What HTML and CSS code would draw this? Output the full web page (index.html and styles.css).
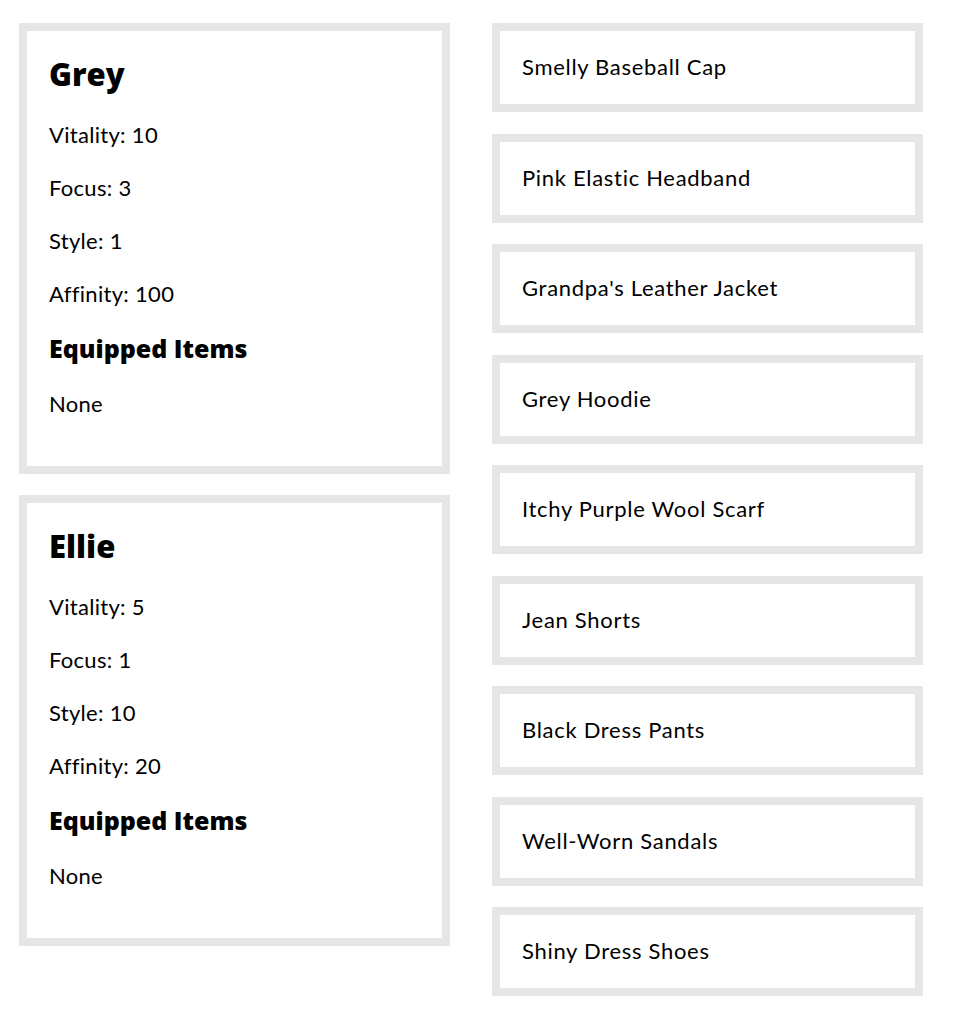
FILE: index.html
```html
<!DOCTYPE html>
<html lang="en">
<head>
<meta charset="utf-8">
<title>Characters</title>
<link rel="stylesheet" href="styles.css">
</head>
<body>
<div class="app">
  <div class="characters">
    <div class="card">
      <h2 class="name">Grey</h2>
      <p class="stat">Vitality: 10</p>
      <p class="stat">Focus: 3</p>
      <p class="stat">Style: 1</p>
      <p class="stat">Affinity: 100</p>
      <h3 class="subhead">Equipped Items</h3>
      <p class="stat">None</p>
    </div>
    <div class="card">
      <h2 class="name">Ellie</h2>
      <p class="stat">Vitality: 5</p>
      <p class="stat">Focus: 1</p>
      <p class="stat">Style: 10</p>
      <p class="stat">Affinity: 20</p>
      <h3 class="subhead">Equipped Items</h3>
      <p class="stat">None</p>
    </div>
  </div>
  <div class="items">
    <div class="item"><p class="item-name">Smelly Baseball Cap</p></div>
    <div class="item"><p class="item-name">Pink Elastic Headband</p></div>
    <div class="item"><p class="item-name">Grandpa's Leather Jacket</p></div>
    <div class="item"><p class="item-name">Grey Hoodie</p></div>
    <div class="item"><p class="item-name">Itchy Purple Wool Scarf</p></div>
    <div class="item"><p class="item-name">Jean Shorts</p></div>
    <div class="item"><p class="item-name">Black Dress Pants</p></div>
    <div class="item"><p class="item-name">Well-Worn Sandals</p></div>
    <div class="item"><p class="item-name">Shiny Dress Shoes</p></div>
  </div>
</div>
</body>
</html>
```
FILE: styles.css
```css
html, body {
  margin: 0;
  padding: 0;
  background: #ffffff;
}

body {
  font-family: Lato, "Noto Sans", "Liberation Sans", sans-serif;
  color: #000000;
}

.app {
  display: grid;
  grid-template-columns: 431px 431px;
  column-gap: 42px;
  align-items: start;
  padding: 23px 0 0 19px;
}

.characters {
  display: flex;
  flex-direction: column;
  gap: 21px;
}

.card {
  border: 8px solid #e6e6e6;
  padding: 25px 22px 24px;
}

.name {
  margin: 0 0 28px;
  font-family: "Open Sans", Lato, sans-serif;
  font-size: 31px;
  line-height: 36px;
  font-weight: 800;
  letter-spacing: 0;
}

.stat {
  margin: 0 0 23px;
  font-size: 22px;
  line-height: 30px;
  letter-spacing: 0.3px;
}

.subhead {
  margin: 1px 0 25px;
  font-family: "Open Sans", Lato, sans-serif;
  font-size: 25px;
  line-height: 32px;
  font-weight: 800;
  letter-spacing: 0;
}

.items {
  display: flex;
  flex-direction: column;
  gap: 21.5px;
}

.item {
  border: 8px solid #e6e6e6;
  padding: 21px 22px 23px;
}

.item-name {
  margin: 0;
  font-size: 22px;
  line-height: 29px;
  letter-spacing: 0.7px;
}
```
